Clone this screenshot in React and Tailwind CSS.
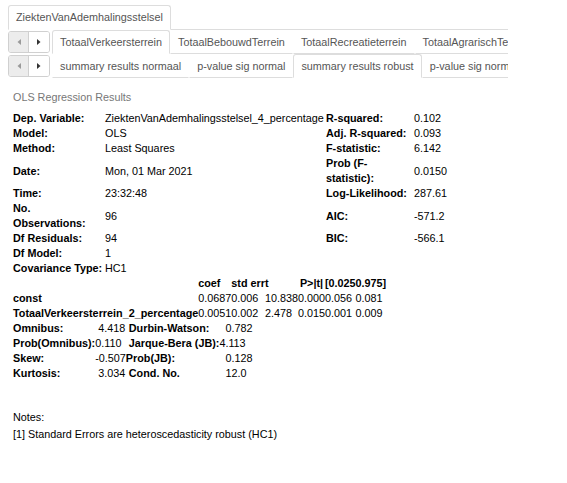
import clsx from 'clsx';

const summary = [
  ['Dep. Variable:', 'ZiektenVanAdemhalingsstelsel_4_percentage', 'R-squared:', '0.102'],
  ['Model:', 'OLS', 'Adj. R-squared:', '0.093'],
  ['Method:', 'Least Squares', 'F-statistic:', '6.142'],
  ['Date:', 'Mon, 01 Mar 2021', 'Prob (F-statistic):', '0.0150'],
  ['Time:', '23:32:48', 'Log-Likelihood:', '287.61'],
  ['No. Observations:', '96', 'AIC:', '-571.2'],
  ['Df Residuals:', '94', 'BIC:', '-566.1'],
  ['Df Model:', '1', '', ''],
  ['Covariance Type:', 'HC1', '', ''],
];

const coefHead = ['', 'coef', 'std err', 't', 'P>|t|', '[0.025', '0.975]'];
const coefRows = [
  ['const', '0.0687', '0.006', '10.838', '0.000', '0.056', '0.081'],
  ['TotaalVerkeersterrein_2_percentage', '0.0051', '0.002', '2.478', '0.015', '0.001', '0.009'],
];

const diagRows = [
  ['Omnibus:', ' 4.418', ' Durbin-Watson:', '  0.782'],
  ['Prob(Omnibus):', '0.110', ' Jarque-Bera (JB):', '4.113'],
  ['Skew:', '-0.507', 'Prob(JB):', '  0.128'],
  ['Kurtosis:', ' 3.034', ' Cond. No.', '  12.0'],
];

function Arrow({ dir, color }) {
  return (
    <svg width="4" height="6" viewBox="0 0 4 6">
      {dir === 'left' ? <path d="M4 0 L0.5 3 L4 6Z" fill={color} /> : <path d="M0 0 L3.5 3 L0 6Z" fill={color} />}
    </svg>
  );
}

function ScrollButtons() {
  return (
    <div className="mt-px flex h-[22px] w-[42px] shrink-0 overflow-hidden rounded-[3px] border border-[#d0d0d0]">
      <div className="flex w-5 items-center justify-center border-r border-[#d0d0d0] bg-[#ececec]">
        <Arrow dir="left" color="#9a9a9a" />
      </div>
      <div className="flex flex-1 items-center justify-center bg-white">
        <Arrow dir="right" color="#333" />
      </div>
    </div>
  );
}

function TabRow({ tabs, active, width }) {
  return (
    <div className={clsx('flex h-6 overflow-hidden', width)}>
      {tabs.map((t, i) => (
        <div
          key={t + i}
          className={clsx(
            'shrink-0 whitespace-nowrap rounded-t-[3px] border px-[7px] leading-[22px] text-[#555]',
            i === active ? 'border-[#ddd] border-b-white bg-white' : 'border-transparent border-b-[#ddd]'
          )}
        >
          {t}
        </div>
      ))}
      <div className="flex-1 border-b border-[#ddd]" />
    </div>
  );
}

export default function App() {
  return (
    <div className="min-h-[483px] bg-white px-2 pt-[5px] font-['Liberation_Sans',Arial,sans-serif] text-[10.8px] text-black">
      {/* tabs */}
      <TabRow tabs={['ZiektenVanAdemhalingsstelsel']} active={0} width="w-[500px] h-[25px]" />
      <div className="flex gap-[2px]">
        <ScrollButtons />
        <TabRow
          tabs={['TotaalVerkeersterrein', 'TotaalBebouwdTerrein', 'TotaalRecreatieterrein', 'TotaalAgrarischTerrein']}
          active={0}
          width="w-[456px]"
        />
      </div>
      <div className="flex gap-[2px]">
        <ScrollButtons />
        <TabRow
          tabs={['summary results normaal', 'p-value sig normal', 'summary results robust', 'p-value sig normal']}
          active={2}
          width="w-[456px]"
        />
      </div>

      {/* output */}
      <div className="pl-[5px] leading-[15px]">
        <div className="mt-[12px] text-[#777]">OLS Regression Results</div>

        <table className="mt-[6px] table-fixed border-collapse">
          <colgroup>
            <col className="w-[92px]" />
            <col className="w-[221px]" />
            <col className="w-[88px]" />
            <col className="w-[60px]" />
          </colgroup>
          <tbody>
            {summary.map((r, i) => (
              <tr key={i}>
                <th className="p-0 text-left align-middle font-bold">{r[0]}</th>
                <td className="whitespace-nowrap p-0 align-middle">{r[1]}</td>
                <th className="p-0 text-left align-middle font-bold">{r[2]}</th>
                <td className="p-0 align-middle">{r[3]}</td>
              </tr>
            ))}
          </tbody>
        </table>

        <table className="border-collapse">
          <tbody>
            <tr>
              {coefHead.map((h, i) => (
                <th key={i} className={clsx('whitespace-nowrap p-0 text-left font-bold', i === 4 && 'pl-[2px]')}>
                  {h}
                </th>
              ))}
            </tr>
            {coefRows.map((r) => (
              <tr key={r[0]}>
                {r.map((c, i) =>
                  i === 0 ? (
                    <th key={i} className="p-0 text-left font-bold">{c}</th>
                  ) : (
                    <td key={i} className="whitespace-nowrap p-0">{c}</td>
                  )
                )}
              </tr>
            ))}
          </tbody>
        </table>

        <table className="border-collapse">
          <tbody>
            {diagRows.map((r) => (
              <tr key={r[0]}>
                <th className="whitespace-pre p-0 text-left font-bold">{r[0]}</th>
                <td className="whitespace-pre p-0">{r[1]}</td>
                <th className="whitespace-pre p-0 text-left font-bold">{r[2]}</th>
                <td className="whitespace-pre p-0">{r[3]}</td>
              </tr>
            ))}
          </tbody>
        </table>

        <div className="mt-[28px] leading-[17px]">
          <div>Notes:</div>
          <div>[1] Standard Errors are heteroscedasticity robust (HC1)</div>
        </div>
      </div>
    </div>
  );
}
